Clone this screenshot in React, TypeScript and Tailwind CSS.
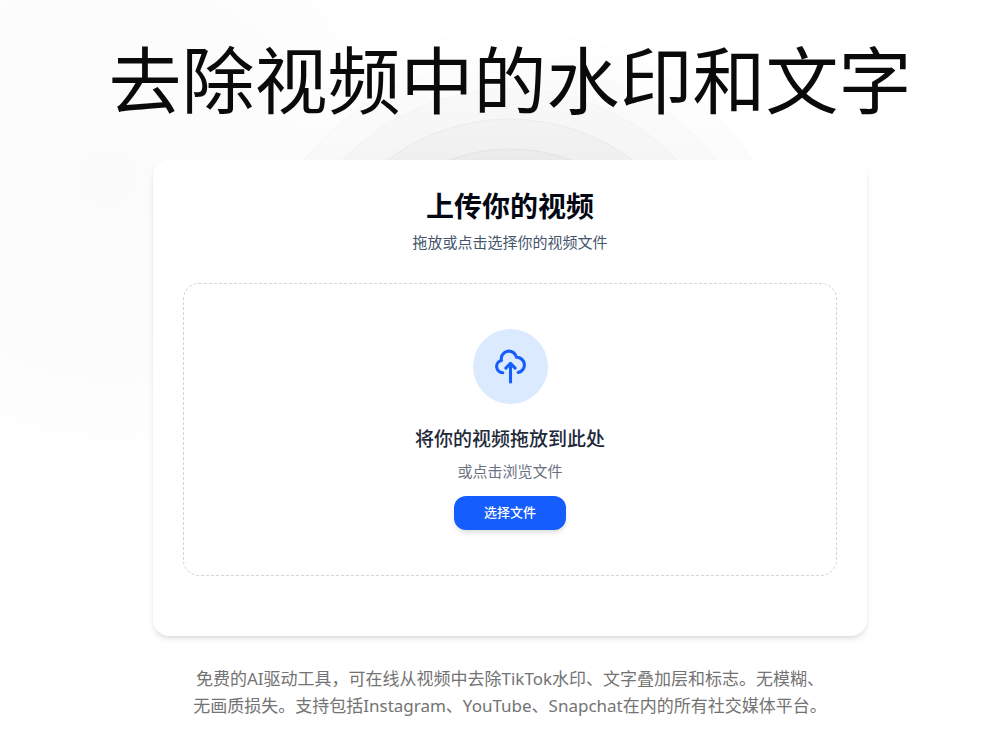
const rings = [
  { r: 292, fill: "#fcfcfc", stroke: "#fafafa" },
  { r: 262, fill: "#f9f9f9", stroke: "#f5f5f5" },
  { r: 233, fill: "#f5f5f5", stroke: "#f0f0f0" },
  { r: 203, fill: "#f0f0f0", stroke: "#e7e7e7" },
  { r: 173, fill: "#ebebeb", stroke: "#e2e2e2" },
];

function Backdrop() {
  return (
    <svg
      className="pointer-events-none absolute left-1/2 top-0 -ml-[290px] h-[640px] w-[600px]"
      viewBox="0 0 600 640"
      aria-hidden="true"
    >
      <defs>
        <linearGradient id="fade" x1="0" y1="0" x2="0" y2="1">
          <stop offset="0" stopColor="#fff" stopOpacity="0.2" />
          <stop offset="0.25" stopColor="#fff" />
        </linearGradient>
        <mask id="ring-mask">
          <rect width="600" height="640" fill="url(#fade)" />
        </mask>
      </defs>
      <g mask="url(#ring-mask)">
        {rings.map((ring) => (
          <circle key={ring.r} cx="300" cy="322" r={ring.r} fill={ring.fill} stroke={ring.stroke} />
        ))}
      </g>
    </svg>
  );
}

function UploadIcon() {
  return (
    <svg
      className="size-[37px]"
      viewBox="0 0 24 24"
      fill="none"
      stroke="currentColor"
      strokeWidth="2"
      strokeLinecap="round"
      strokeLinejoin="round"
      aria-hidden="true"
    >
      <path d="M7 16a4 4 0 0 1-.88-7.903A5 5 0 1 1 15.9 6L16 6a5 5 0 0 1 1 9.9M15 13l-3-3m0 0-3 3m3-3v12" />
    </svg>
  );
}

export default function App() {
  return (
    <div className="relative min-h-screen overflow-hidden bg-white bg-[radial-gradient(ellipse_320px_300px_at_110px_180px,#fbfbfb,#fcfcfc_60%,#ffffff)] pl-5 font-['Noto_Sans','Noto_Sans_CJK_SC',sans-serif]">
      <Backdrop />
      <main className="relative flex flex-col items-center pt-11">
        <h1 className="whitespace-nowrap text-center text-[73px] leading-[72px] text-neutral-950">
          去除视频中的水印和文字
        </h1>

        <section className="mt-11 w-full max-w-[714px] rounded-2xl bg-white px-[30px] pt-7 pb-[60px] shadow-md">
          <header className="text-center">
            <h2 className="text-[28px] font-bold leading-9 text-gray-950">上传你的视频</h2>
            <p className="mt-[6px] text-[15px] leading-6 text-slate-600">拖放或点击选择你的视频文件</p>
          </header>

          <div className="mt-[29px] flex flex-col items-center rounded-2xl border border-dashed border-gray-300 py-[45px]">
            <div className="flex size-[75px] items-center justify-center rounded-full bg-blue-100 text-blue-600">
              <UploadIcon />
            </div>
            <h3 className="mt-[21px] text-[19px] font-medium leading-7 text-gray-800">
              将你的视频拖放到此处
            </h3>
            <p className="mt-[6px] text-[15px] leading-6 text-gray-500">或点击浏览文件</p>
            <button
              type="button"
              className="mt-[13px] h-[34px] rounded-xl bg-blue-600 px-[30px] text-[13px] font-medium text-white shadow-md hover:bg-blue-700"
            >
              选择文件
            </button>
          </div>
        </section>

        <p className="mt-[29px] text-center text-[17px] leading-[27px] text-neutral-500">
          免费的AI驱动工具，可在线从视频中去除TikTok水印、文字叠加层和标志。无模糊、
          <br />
          无画质损失。支持包括Instagram、YouTube、Snapchat在内的所有社交媒体平台。
        </p>
      </main>
    </div>
  );
}
